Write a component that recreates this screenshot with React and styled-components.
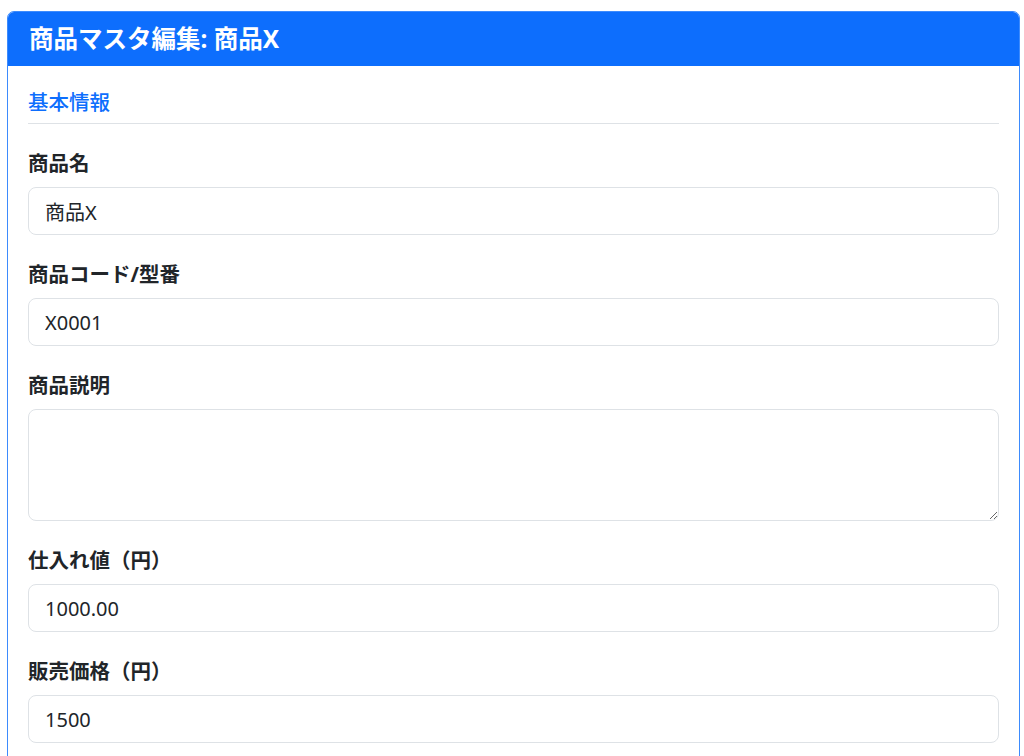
import React from "react";
import styled, { createGlobalStyle } from "styled-components";

const Global = createGlobalStyle`
  html, body { margin: 0; padding: 0; overflow: hidden; background: #fff; }
  body {
    font-family: "Noto Sans", "Noto Sans CJK JP", sans-serif;
    color: #212529;
  }
  * { box-sizing: border-box; }
`;

const Page = styled.div`
  padding: 11px 4px 0 7px;
`;

const Card = styled.section`
  border: 1px solid #3d8bfd;
  border-radius: 7px;
  overflow: hidden;
  background: #fff;
`;

const CardHeader = styled.header`
  background: #0d6efd;
  color: #fff;
  height: 54px;
  padding: 0 21px;
  display: flex;
  align-items: center;
`;

const Title = styled.h4`
  margin: 0;
  font-size: 24.5px;
  font-weight: 700;
  line-height: 1.2;
`;

const CardBody = styled.div`
  padding: 24px 20px 21px;
`;

const SectionTitle = styled.h5`
  margin: 0 0 24px;
  padding-bottom: 9px;
  border-bottom: 1px solid #dee2e6;
  color: #0d6efd;
  font-size: 20.5px;
  font-weight: 500;
  line-height: 24px;
`;

const Field = styled.div`
  margin-bottom: 24px;
`;

const Label = styled.label`
  display: block;
  margin-bottom: 9px;
  font-size: 20.5px;
  font-weight: 700;
  line-height: 30px;
  color: #212529;
`;

const inputBase = `
  display: block;
  width: 100%;
  border: 1px solid #dee2e6;
  border-radius: 8px;
  padding: 8px 16px;
  font-family: "Noto Sans", "Noto Sans CJK JP", sans-serif;
  font-size: 20px;
  line-height: 30px;
  color: #212529;
  background: #fff;
  outline: none;
`;

const Input = styled.input`
  ${inputBase}
  height: 48px;
`;

const TextArea = styled.textarea`
  ${inputBase}
  height: 112px;
  resize: vertical;
`;

const fields = [
  { label: "商品名", value: "商品X" },
  { label: "商品コード/型番", value: "X0001" },
  { label: "商品説明", value: "", multiline: true },
  { label: "仕入れ値（円）", value: "1000.00" },
  { label: "販売価格（円）", value: "1500" },
];

export default function App() {
  return (
    <>
      <Global />
      <Page>
        <Card>
          <CardHeader>
            <Title>商品マスタ編集: 商品X</Title>
          </CardHeader>
          <CardBody>
            <SectionTitle>基本情報</SectionTitle>
            {fields.map((f, i) => (
              <Field key={i}>
                <Label htmlFor={`f${i}`}>{f.label}</Label>
                {f.multiline ? (
                  <TextArea id={`f${i}`} defaultValue={f.value} />
                ) : (
                  <Input id={`f${i}`} defaultValue={f.value} />
                )}
              </Field>
            ))}
          </CardBody>
        </Card>
      </Page>
    </>
  );
}
